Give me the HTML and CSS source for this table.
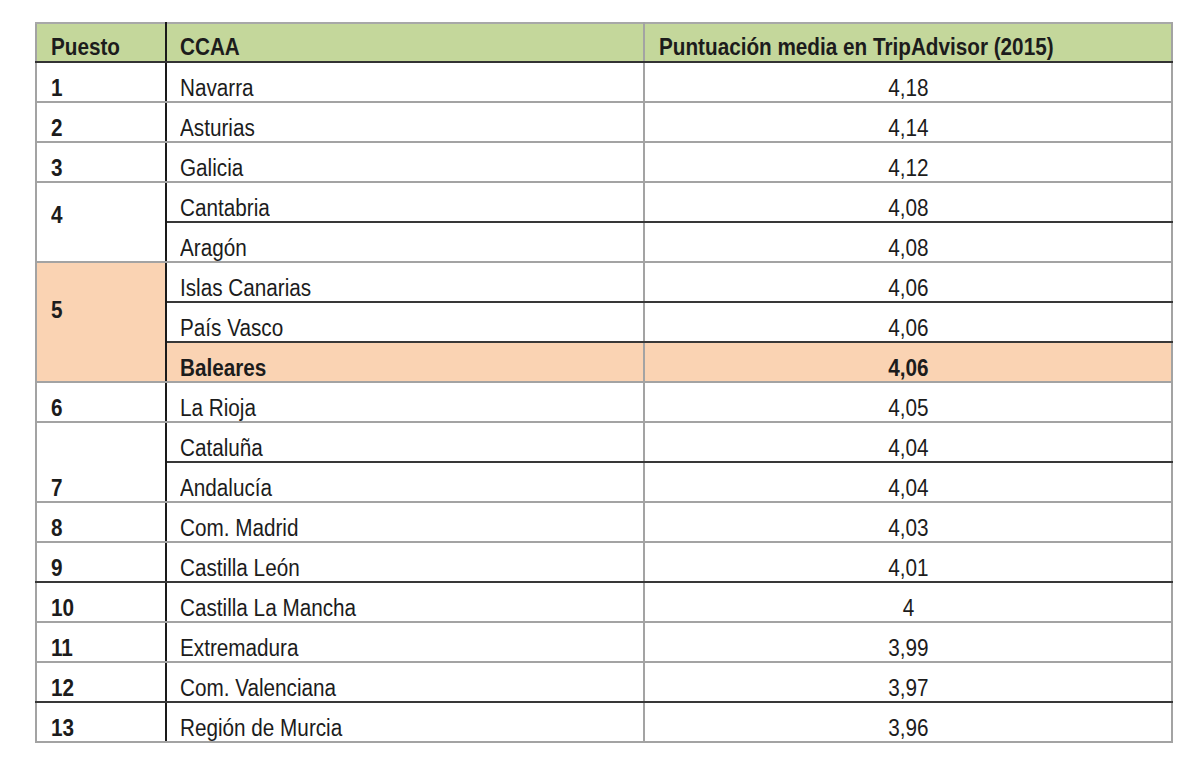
FILE: index.html
```html
<!DOCTYPE html>
<html lang="es">
<head>
<meta charset="utf-8">
<title>Puntuación media en TripAdvisor (2015)</title>
<link rel="stylesheet" href="styles.css">
</head>
<body>
<table class="rank">
<colgroup><col class="c1"><col class="c2"><col class="c3"></colgroup>
<thead>
<tr><th><span class="t">Puesto</span></th><th><span class="t">CCAA</span></th><th><span class="t">Puntuación media en TripAdvisor (2015)</span></th></tr>
</thead>
<tbody>
<tr><td class="p"><span class="t">1</span></td><td><span class="t">Navarra</span></td><td class="n"><span class="t">4,18</span></td></tr>
<tr><td class="p"><span class="t">2</span></td><td><span class="t">Asturias</span></td><td class="n"><span class="t">4,14</span></td></tr>
<tr><td class="p"><span class="t">3</span></td><td><span class="t">Galicia</span></td><td class="n"><span class="t">4,12</span></td></tr>
<tr class="db"><td class="p top4 sp" rowspan="2"><span class="t">4</span></td><td><span class="t">Cantabria</span></td><td class="n"><span class="t">4,08</span></td></tr>
<tr><td><span class="t">Aragón</span></td><td class="n"><span class="t">4,08</span></td></tr>
<tr class="db"><td class="p top5 hl sp" rowspan="3"><span class="t">5</span></td><td><span class="t">Islas Canarias</span></td><td class="n"><span class="t">4,06</span></td></tr>
<tr class="db"><td><span class="t">País Vasco</span></td><td class="n"><span class="t">4,06</span></td></tr>
<tr class="hlrow"><td class="b"><span class="t">Baleares</span></td><td class="n b"><span class="t">4,06</span></td></tr>
<tr><td class="p"><span class="t">6</span></td><td><span class="t">La Rioja</span></td><td class="n"><span class="t">4,05</span></td></tr>
<tr class="db"><td class="p sp" rowspan="2"><span class="t">7</span></td><td><span class="t">Cataluña</span></td><td class="n"><span class="t">4,04</span></td></tr>
<tr><td><span class="t">Andalucía</span></td><td class="n"><span class="t">4,04</span></td></tr>
<tr><td class="p"><span class="t">8</span></td><td><span class="t">Com. Madrid</span></td><td class="n"><span class="t">4,03</span></td></tr>
<tr class="db"><td class="p"><span class="t">9</span></td><td><span class="t">Castilla León</span></td><td class="n"><span class="t">4,01</span></td></tr>
<tr><td class="p"><span class="t">10</span></td><td><span class="t">Castilla La Mancha</span></td><td class="n"><span class="t">4</span></td></tr>
<tr><td class="p"><span class="t">11</span></td><td><span class="t">Extremadura</span></td><td class="n"><span class="t">3,99</span></td></tr>
<tr class="db"><td class="p"><span class="t">12</span></td><td><span class="t">Com. Valenciana</span></td><td class="n"><span class="t">3,97</span></td></tr>
<tr><td class="p"><span class="t">13</span></td><td><span class="t">Región de Murcia</span></td><td class="n"><span class="t">3,96</span></td></tr>
</tbody>
</table>
</body>
</html>
```
FILE: styles.css
```css
html, body {
  margin: 0;
  background: #ffffff;
}
body {
  padding: 22px 0 0 35px;
  font-family: "Liberation Sans", Arial, sans-serif;
  color: #1c1c1c;
}
.rank {
  border-collapse: collapse;
  width: 1136px;
  table-layout: fixed;
  font-size: 23px;
  line-height: 25px;
}
.c1 { width: 130px; }
.c2 { width: 478px; }
.c3 { width: 528px; }
.rank th, .rank td {
  height: 38px;
  padding: 0 0 0 13px;
  border: 2px solid #a3a3a3;
  vertical-align: bottom;
  text-align: left;
  white-space: nowrap;
}
.t {
  display: inline-block;
  transform: scaleX(0.9);
  transform-origin: left center;
}
.rank td.n .t { transform-origin: center center; }
.rank th {
  height: 36px;
  background: #c4d79b;
  font-weight: bold;
  padding-bottom: 1px;
  border-top-color: #a8a8a8;
  border-bottom-color: #333333;
}
.rank th:first-child, .rank td.p {
  border-right-color: #1a1a1a;
  padding-left: 14px;
}
.rank th:last-child { padding-left: 14px; }
.rank tr.db td { border-bottom-color: #383838; }
.rank tr.db td.sp { border-bottom-color: #a3a3a3; }
.rank td.p { font-weight: bold; }
.rank td.n {
  text-align: center;
  padding-left: 0;
}
.rank td.b { font-weight: bold; }
.rank td.top4 { vertical-align: top; padding-top: 20px; }
.rank td.top5 { vertical-align: top; padding-top: 35px; }
.rank td.hl, .rank tr.hlrow td { background: #fad3b3; }
```
